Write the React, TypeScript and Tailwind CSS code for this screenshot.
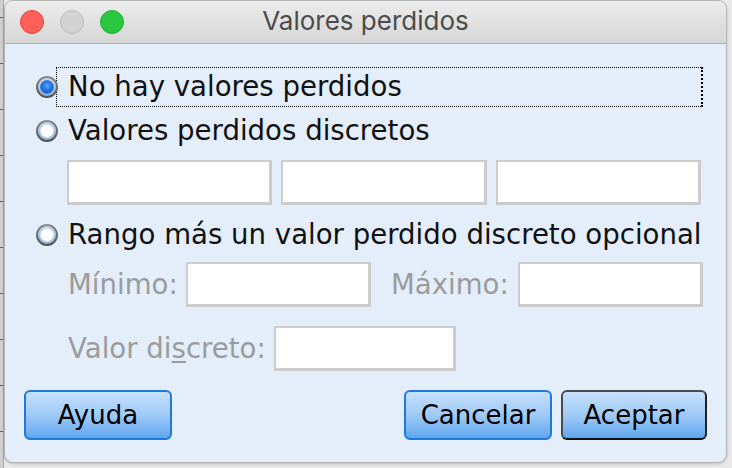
import React from 'react';

const Radio: React.FC<{ checked?: boolean }> = ({ checked = false }) => (
  <div className="relative z-10 w-[22px] h-[22px] shrink-0 rounded-full bg-gradient-to-b from-[#8e8e8e] to-[#4f4f4f] p-[2px]">
    <div className="w-full h-full rounded-full bg-gradient-to-b from-[#c9dcf0] to-[#8fb4dc] p-[2px]">
      {checked ? (
        <div className="w-full h-full rounded-full bg-[radial-gradient(circle_at_50%_40%,#5aa2ff_0%,#1d6ad8_60%,#1450b0_100%)] border border-[#3d7fd0]" />
      ) : (
        <div className="w-full h-full rounded-full bg-white border border-[#d8e6f5]" />
      )}
    </div>
  </div>
);

const RadioRow: React.FC<{ label: string; checked?: boolean; focused?: boolean; className?: string }> = ({
  label,
  checked,
  focused,
  className = '',
}) => (
  <div className={`flex items-center h-[40px] ml-[12px] mr-[4px] ${className}`}>
    <Radio checked={checked} />
    <div
      className={`flex-1 h-full flex items-center -ml-[2px] pl-[11px] border border-dotted ${
        focused ? 'border-black border-r-2' : 'border-transparent'
      }`}
    >
      <span className="text-[27.6px] text-[#111] leading-none whitespace-nowrap">{label}</span>
    </div>
  </div>
);

const Field: React.FC<{ className?: string }> = ({ className = '' }) => (
  <div className={`h-[45px] bg-white border-2 border-[#cccccc] border-b-[3px] border-r-[3px] ${className}`} />
);

const Button: React.FC<{ label: string; isDefault?: boolean; className?: string }> = ({ label, isDefault, className = '' }) => (
  <button
    className={`h-[50px] rounded-[6px] border-2 bg-gradient-to-b from-[#c6e0fb] via-[#9fcaf7] to-[#5fa6ef] text-[26px] text-black leading-none flex items-center justify-center ${
      isDefault ? 'border-[#4a4a4a] border-b-[#111] border-r-[#222]' : 'border-[#1f78dc]'
    } ${className}`}
  >
    {label}
  </button>
);

const ticks = [0, 1, 2, 3, 4, 5, 6, 7, 8, 9];

export default function App() {
  return (
    <div className="w-[732px] h-[468px] flex bg-[#e9e9e9] font-['DejaVu_Sans',sans-serif] overflow-hidden">
      <div className="w-[4px] h-full bg-[#cfcfcf] border-r border-[#a9a9a9] flex flex-col pt-[17px] gap-[45px]">
        {ticks.map(t => (
          <div key={t} className="h-[1px] w-full bg-[#56606e]" />
        ))}
      </div>

      <div className="w-[723px] h-[463px] rounded-[9px] border border-[#b4b4b4] bg-[#e3eefa] overflow-hidden flex flex-col shadow-[0_1px_3px_rgba(0,0,0,0.2)]">
        {/* title bar */}
        <div className="relative h-[43px] shrink-0 bg-gradient-to-b from-[#ececec] to-[#d6d6d6] border-b border-[#b1b1b1] flex items-center justify-center">
          <div className="absolute left-[15px] top-[9px] flex gap-[16px]">
            <div className="w-[24px] h-[24px] rounded-full bg-[#fe5f57] border border-[#e2463f]" />
            <div className="w-[24px] h-[24px] rounded-full bg-[#d3d3d3] border border-[#bcbcbc]" />
            <div className="w-[24px] h-[24px] rounded-full bg-[#29c73f] border border-[#1ead2e]" />
          </div>
          <span className="font-['Inter',sans-serif] text-[26px] text-[#4b4b4b] leading-none -mt-[3px]">Valores perdidos</span>
        </div>

        {/* content */}
        <div className="flex-1 flex flex-col pt-[23px] px-[19px]">
          <RadioRow label="No hay valores perdidos" checked focused />
          <RadioRow label="Valores perdidos discretos" className="mt-[4px]" />

          <div className="mt-[9px] ml-[43px] mr-[6px] grid grid-cols-3 gap-[9px]">
            <Field />
            <Field />
            <Field />
          </div>

          <RadioRow label="Rango más un valor perdido discreto opcional" className="mt-[10px]" />

          <div className="mt-[7px] ml-[44px] flex items-center h-[45px]">
            <span className="w-[118px] text-[27.6px] text-[#9b9b9b] leading-none">Mínimo:</span>
            <Field className="w-[185px]" />
            <span className="ml-[20px] w-[127px] text-[27.6px] text-[#9b9b9b] leading-none">Máximo:</span>
            <Field className="w-[185px]" />
          </div>

          <div className="mt-[19px] ml-[44px] flex items-center h-[45px]">
            <span className="w-[206px] text-[27.6px] text-[#9b9b9b] leading-none">
              Valor di<span className="underline underline-offset-[3px]">s</span>creto:
            </span>
            <Field className="w-[182px]" />
          </div>

          <div className="mt-[19px] flex items-center">
            <Button label="Ayuda" className="w-[148px]" />
            <div className="flex-1" />
            <Button label="Cancelar" className="w-[148px]" />
            <Button label="Aceptar" isDefault className="w-[146px] ml-[9px]" />
          </div>
        </div>
      </div>
    </div>
  );
}
